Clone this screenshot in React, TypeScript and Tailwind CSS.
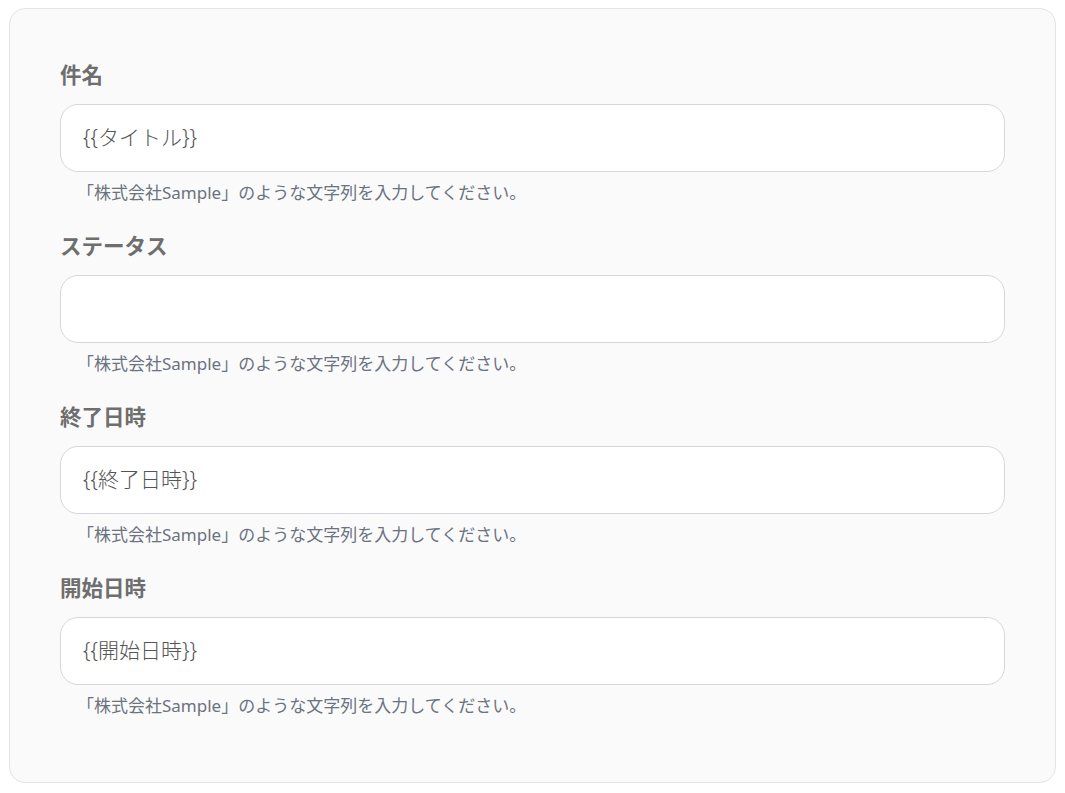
const fields = [
  { label: "件名", value: "{{タイトル}}" },
  { label: "ステータス", value: "" },
  { label: "終了日時", value: "{{終了日時}}" },
  { label: "開始日時", value: "{{開始日時}}" },
];

const font = {
  fontFamily: '"Noto Sans", "Noto Sans CJK JP", sans-serif',
};

export default function App() {
  return (
    <div className="min-h-screen bg-white pl-[9px] pt-[8px]" style={font}>
      <div className="w-[1047px] h-[775px] rounded-[16px] border border-[#e3e4e8] bg-[#fafafa] px-[50px] pt-[52px]">
        {fields.map((f) => (
          <div key={f.label} className="mb-[28px]">
            <div className="text-[21.5px] leading-[28px] font-bold text-[#6e6e6e]">
              {f.label}
            </div>
            <div className="mt-[15px] h-[68px] rounded-[18px] border border-[#d4d7dd] bg-white px-[22px] flex items-center text-[21px] font-light text-[#555]">
              {f.value}
            </div>
            <div className="mt-[10px] pl-[17px] text-[17px] leading-[22px] text-[#6b7280]">
              「株式会社Sample」のような文字列を入力してください。
            </div>
          </div>
        ))}
      </div>
    </div>
  );
}
